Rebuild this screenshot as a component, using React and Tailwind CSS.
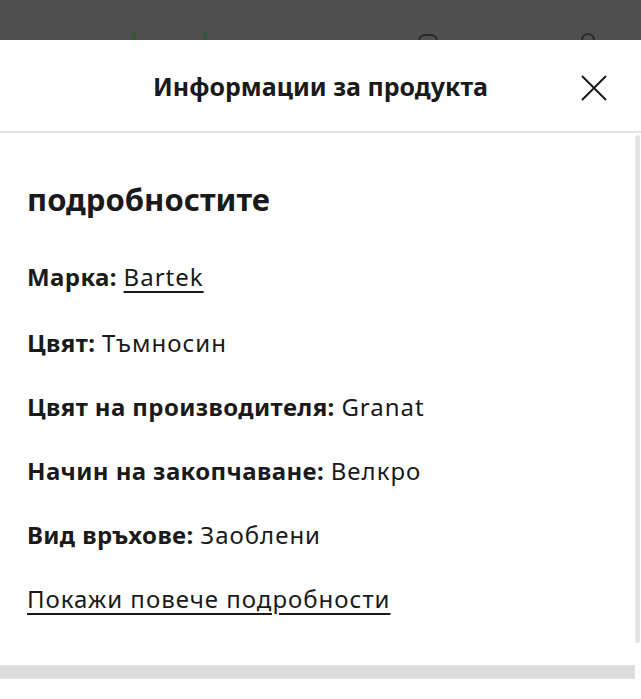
import React from 'react';

const rows = [
  { label: 'Марка:', value: 'Bartek', link: true },
  { label: 'Цвят:', value: 'Тъмносин' },
  { label: 'Цвят на производителя:', value: 'Granat' },
  { label: 'Начин на закопчаване:', value: 'Велкро' },
  { label: 'Вид връхове:', value: 'Заоблени' },
];

const CloseIcon = () => (
  <svg width="26" height="26" viewBox="0 0 26 26" fill="none" stroke="#1a1a1a" strokeWidth="2" strokeLinecap="round">
    <path d="M1.5 1.5 L24.5 24.5 M24.5 1.5 L1.5 24.5" />
  </svg>
);

const App = () => {
  return (
    <div className="w-[641px] h-[699px] bg-white overflow-hidden text-[#1a1a1a]" style={{ fontFamily: '"Noto Sans", sans-serif' }}>
      {/* dimmed page behind the sheet */}
      <div className="h-[40px] bg-[#4f4f4f] relative overflow-hidden">
        <span className="absolute left-[132px] top-[32px] w-[4px] h-[8px] bg-[#2f5a2f] opacity-80" />
        <span className="absolute left-[203px] top-[32px] w-[4px] h-[8px] bg-[#2f5a2f] opacity-80" />
        <span className="absolute left-[418px] top-[34px] w-[20px] h-[14px] rounded-full border-2 border-[#2a2a2a]" />
        <span className="absolute left-[581px] top-[33px] w-[14px] h-[14px] rounded-full border-2 border-[#2a2a2a]" />
      </div>

      <div className="bg-white">
        <header className="relative h-[93px] flex items-center justify-center border-b-2 border-[#e2e2e2]">
          <h2 className="text-[25px] font-bold pt-[2px]">Информации за продукта</h2>
          <button className="absolute right-[34px] top-[35px]">
            <CloseIcon />
          </button>
        </header>

        <div className="flex h-[532px]">
          <div className="flex-1 pl-[27px] pt-[48px]">
            <h3 className="text-[31px] leading-[36px] font-bold mb-[43px]">подробностите</h3>
            <div className="flex flex-col gap-[31px] tracking-[0.4px]">
              {rows.map((r, i) => (
                <p key={r.label} className={`text-[24px] leading-[33px] ${i === 1 ? 'mt-[2px]' : ''}`}>
                  <span className="font-bold">{r.label}</span>{' '}
                  <span className={`tracking-[1px] ${r.link ? 'underline underline-offset-[5px]' : ''}`}>{r.value}</span>
                </p>
              ))}
              <a className="text-[24px] leading-[33px] tracking-[1px] underline underline-offset-[5px]">Покажи повече подробности</a>
            </div>
          </div>
          <div className="w-[6px] pt-[2px] pb-[22px] pr-[1px]">
            <div className="h-full bg-[#e4e4e4] rounded-full" />
          </div>
        </div>

        <div className="h-[14px] mr-[6px] bg-[#dedede]" />
      </div>
    </div>
  );
};

export default App;
